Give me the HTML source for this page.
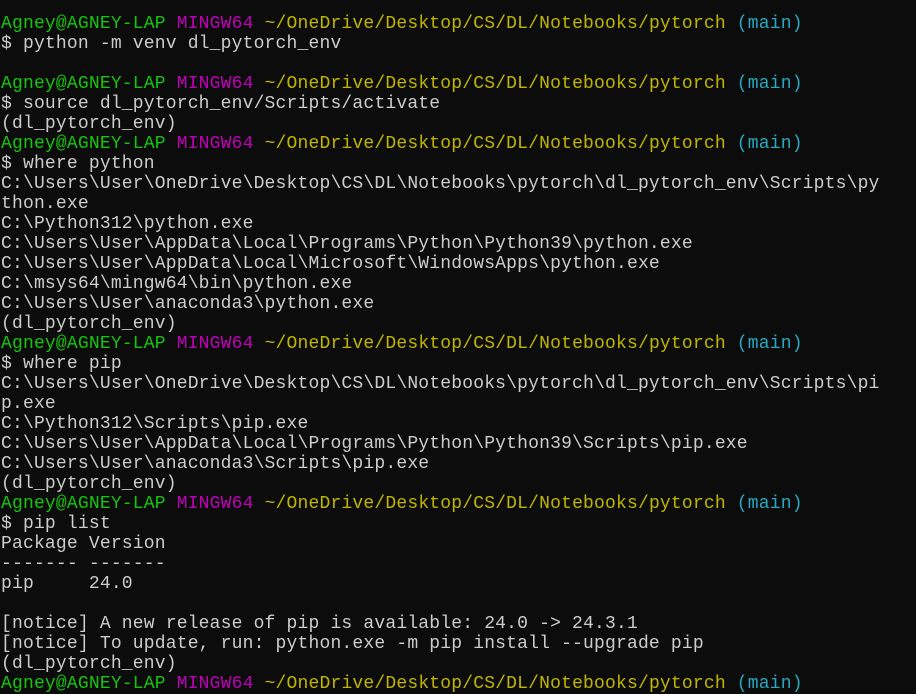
<!DOCTYPE html>
<html><head><meta charset="utf-8"><style>
html,body{margin:0;padding:0;background:#0c0c0c;width:916px;height:677px;overflow:hidden}
pre{margin:0;position:absolute;left:1px;top:14px;font-family:"Liberation Mono",monospace;font-size:18px;letter-spacing:0.18px;line-height:20px;color:#cccccc;white-space:pre}
.g{color:#16c60c}.m{color:#c000b8}.y{color:#c1b700}.c{color:#2aa8c0}
</style></head><body><pre><span class="g">Agney@AGNEY-LAP</span> <span class="m">MINGW64</span> <span class="y">~/OneDrive/Desktop/CS/DL/Notebooks/pytorch</span> <span class="c">(main)</span>
$ python -m venv dl_pytorch_env

<span class="g">Agney@AGNEY-LAP</span> <span class="m">MINGW64</span> <span class="y">~/OneDrive/Desktop/CS/DL/Notebooks/pytorch</span> <span class="c">(main)</span>
$ source dl_pytorch_env/Scripts/activate
(dl_pytorch_env)
<span class="g">Agney@AGNEY-LAP</span> <span class="m">MINGW64</span> <span class="y">~/OneDrive/Desktop/CS/DL/Notebooks/pytorch</span> <span class="c">(main)</span>
$ where python
C:\Users\User\OneDrive\Desktop\CS\DL\Notebooks\pytorch\dl_pytorch_env\Scripts\py
thon.exe
C:\Python312\python.exe
C:\Users\User\AppData\Local\Programs\Python\Python39\python.exe
C:\Users\User\AppData\Local\Microsoft\WindowsApps\python.exe
C:\msys64\mingw64\bin\python.exe
C:\Users\User\anaconda3\python.exe
(dl_pytorch_env)
<span class="g">Agney@AGNEY-LAP</span> <span class="m">MINGW64</span> <span class="y">~/OneDrive/Desktop/CS/DL/Notebooks/pytorch</span> <span class="c">(main)</span>
$ where pip
C:\Users\User\OneDrive\Desktop\CS\DL\Notebooks\pytorch\dl_pytorch_env\Scripts\pi
p.exe
C:\Python312\Scripts\pip.exe
C:\Users\User\AppData\Local\Programs\Python\Python39\Scripts\pip.exe
C:\Users\User\anaconda3\Scripts\pip.exe
(dl_pytorch_env)
<span class="g">Agney@AGNEY-LAP</span> <span class="m">MINGW64</span> <span class="y">~/OneDrive/Desktop/CS/DL/Notebooks/pytorch</span> <span class="c">(main)</span>
$ pip list
Package Version
------- -------
pip     24.0

[notice] A new release of pip is available: 24.0 -&gt; 24.3.1
[notice] To update, run: python.exe -m pip install --upgrade pip
(dl_pytorch_env)
<span class="g">Agney@AGNEY-LAP</span> <span class="m">MINGW64</span> <span class="y">~/OneDrive/Desktop/CS/DL/Notebooks/pytorch</span> <span class="c">(main)</span></pre></body></html>
